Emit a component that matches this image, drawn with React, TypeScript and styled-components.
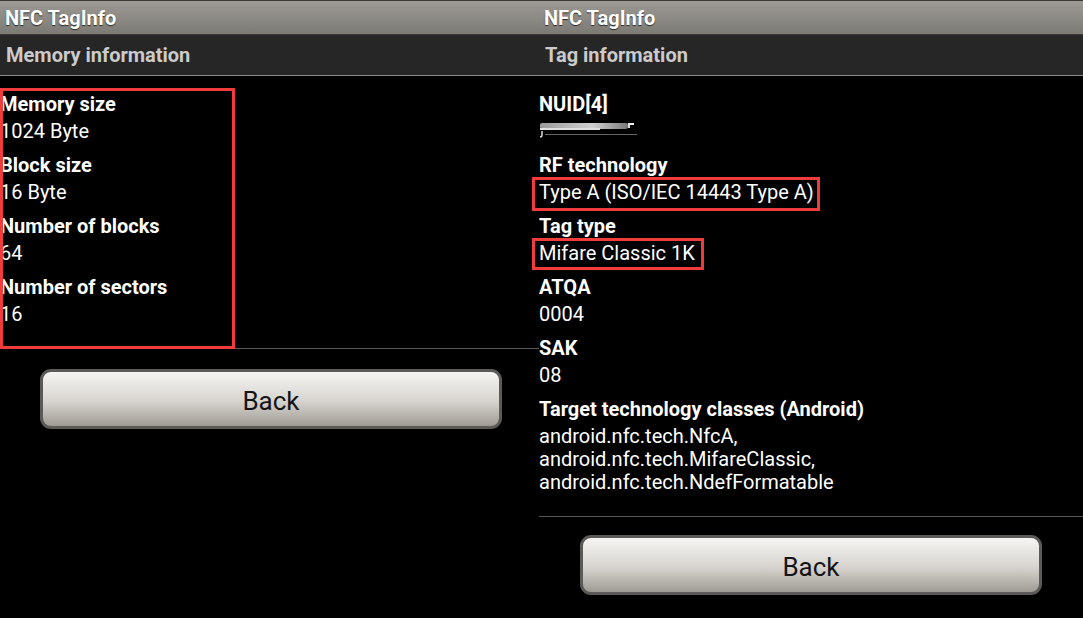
import React from "react";
import styled, { createGlobalStyle } from "styled-components";

const Global = createGlobalStyle`
  html, body { margin: 0; padding: 0; background: #000; }
  body { font-family: Roboto, "Noto Sans", "Liberation Sans", sans-serif; }
  #root { width: 1083px; height: 618px; overflow: hidden; }
`;

const Screen = styled.div`
  display: flex;
  width: 1083px;
  height: 618px;
  background: #000;
  color: #fff;
`;

const Panel = styled.section<{ $width: number }>`
  width: ${(p) => p.$width}px;
  flex: none;
  display: flex;
  flex-direction: column;
`;

const TitleBar = styled.header`
  height: 33px;
  border-top: 1px solid #3a3936;
  border-bottom: 1px solid #3c3b39;
  background: linear-gradient(#9d9a95, #7c7a75);
  display: flex;
  align-items: center;
  padding-left: 5px;
  font-weight: 700;
  font-size: 20px;
  color: #fff;
  text-shadow: 0 1px 1px rgba(0, 0, 0, 0.7);
`;

const SubBar = styled.div`
  height: 40px;
  background: #262626;
  border-bottom: 1px solid #8c8c8c;
  display: flex;
  align-items: center;
  padding-left: 6px;
  font-weight: 700;
  font-size: 20px;
  color: #cbcbcb;
`;

const Content = styled.div`
  padding-top: 15px;
`;

const List = styled.div<{ $bottom: number }>`
  position: relative;
  padding-bottom: ${(p) => p.$bottom}px;
  border-bottom: 1px solid #5a5a5a;
`;

const Item = styled.div`
  margin-bottom: 7px;
`;

const Label = styled.div`
  font-weight: 700;
  font-size: 20px;
  line-height: 27px;
  color: #fff;
  white-space: nowrap;
`;

const Value = styled.div<{ $multi?: boolean }>`
  position: relative;
  font-size: 20px;
  line-height: ${(p) => (p.$multi ? "23px" : "27px")};
  padding-top: ${(p) => (p.$multi ? "2px" : "0")};
  color: #fff;
  white-space: nowrap;
`;

const Mark = styled.span<{ $w: number; $h: number; $dx: number; $dy: number }>`
  position: absolute;
  left: ${(p) => p.$dx}px;
  top: ${(p) => p.$dy}px;
  width: ${(p) => p.$w}px;
  height: ${(p) => p.$h}px;
  box-sizing: border-box;
  border: 3px solid #f03c3c;
  pointer-events: none;
`;

const ButtonRow = styled.div<{ $left: number; $top: number }>`
  padding-top: ${(p) => p.$top}px;
  padding-left: ${(p) => p.$left}px;
`;

const BackButton = styled.button`
  width: 462px;
  height: 60px;
  box-sizing: border-box;
  border: 3px solid #5b5a57;
  border-radius: 11px;
  background: linear-gradient(#f6f5f3, #d6d3ce 55%, #9f9b94);
  font-family: Roboto, "Noto Sans", sans-serif;
  font-size: 26px;
  color: #141414;
  padding: 0;
  padding-top: 3px;
  cursor: pointer;
`;

const Redacted = () => (
  <svg width="100" height="27" viewBox="0 0 100 27" style={{ display: "block" }}>
    <defs>
      <linearGradient id="rg" x1="0" x2="1">
        <stop offset="0" stopColor="#9a9a9a" />
        <stop offset="0.6" stopColor="#d0d0d0" />
        <stop offset="1" stopColor="#7a7a7a" />
      </linearGradient>
    </defs>
    <rect x="1" y="5" width="88" height="6" rx="2" fill="url(#rg)" />
    <rect x="1" y="10" width="60" height="2" fill="#e0e0e0" />
    <rect x="89" y="5" width="6" height="2" fill="#eee" />
    <rect x="89" y="7" width="2" height="3" fill="#ddd" />
    <rect x="6" y="16" width="92" height="1" fill="#666" />
    <path d="M3 13 v4 q0 2 -2 2" stroke="#ddd" strokeWidth="1.5" fill="none" />
  </svg>
);

const memory = [
  ["Memory size", "1024 Byte"],
  ["Block size", "16 Byte"],
  ["Number of blocks", "64"],
  ["Number of sectors", "16"],
];

export default function App() {
  return (
    <>
      <Global />
      <Screen>
        <Panel $width={539}>
          <TitleBar>NFC TagInfo</TitleBar>
          <SubBar>Memory information</SubBar>
          <Content>
            <List $bottom={13}>
              {memory.map(([l, v]) => (
                <Item key={l}>
                  <Label>{l}</Label>
                  <Value>{v}</Value>
                </Item>
              ))}
              <Mark $w={235} $h={261} $dx={0} $dy={-3} />
            </List>
            <ButtonRow $left={40} $top={20}>
              <BackButton>Back</BackButton>
            </ButtonRow>
          </Content>
        </Panel>
        <Panel $width={544}>
          <TitleBar>NFC TagInfo</TitleBar>
          <SubBar>Tag information</SubBar>
          <Content>
            <List $bottom={15}>
              <Item>
                <Label>NUID[4]</Label>
                <Value>
                  <Redacted />
                </Value>
              </Item>
              <Item>
                <Label>RF technology</Label>
                <Value>
                  Type A (ISO/IEC 14443 Type A)
                  <Mark $w={288} $h={34} $dx={-7} $dy={-2} />
                </Value>
              </Item>
              <Item>
                <Label>Tag type</Label>
                <Value>
                  Mifare Classic 1K
                  <Mark $w={172} $h={32} $dx={-7} $dy={-2} />
                </Value>
              </Item>
              <Item>
                <Label>ATQA</Label>
                <Value>0004</Value>
              </Item>
              <Item>
                <Label>SAK</Label>
                <Value>08</Value>
              </Item>
              <Item>
                <Label>Target technology classes (Android)</Label>
                <Value $multi>
                  android.nfc.tech.NfcA,
                  <br />
                  android.nfc.tech.MifareClassic,
                  <br />
                  android.nfc.tech.NdefFormatable
                </Value>
              </Item>
            </List>
            <ButtonRow $left={41} $top={18}>
              <BackButton>Back</BackButton>
            </ButtonRow>
          </Content>
        </Panel>
      </Screen>
    </>
  );
}
